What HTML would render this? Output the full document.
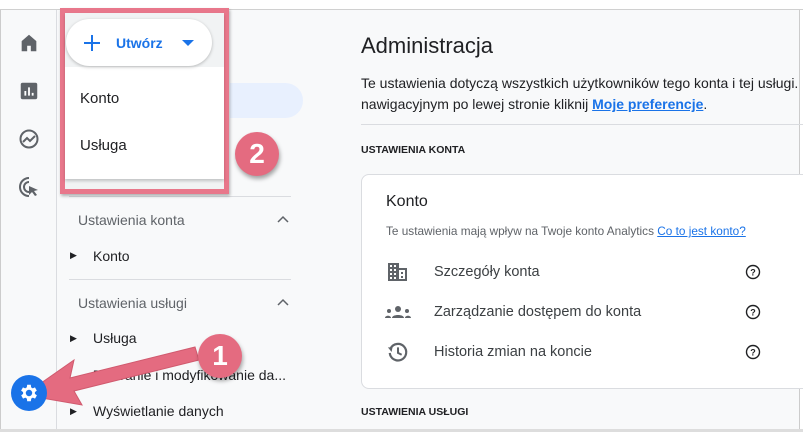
<!DOCTYPE html>
<html><head><meta charset="utf-8"><style>
*{margin:0;padding:0;box-sizing:border-box}
body{width:803px;height:432px;overflow:hidden;background:#f8f9fa;font-family:"Liberation Sans",Arial,sans-serif;position:relative;color:#202124}
.abs{position:absolute}
</style></head><body>
<div class="abs" style="left:0;top:0;width:803px;height:10px;background:#fff;border-bottom:1px solid #d0d0d0"></div>
<div class="abs" style="left:0;top:10px;width:57px;height:422px;background:#f8f9fa;border-right:1px solid #dadce0;border-left:1px solid #ccc"></div>
<div class="abs" style="left:799px;top:10px;width:4px;height:422px;background:#fff;border-left:1px solid #ccc"></div>
<div class="abs" style="left:0;top:429px;width:803px;height:3px;background:#ddd"></div>
<svg class="abs" style="left:18px;top:32px" width="22" height="22" viewBox="0 0 24 24"><path d="M4 21V10l8-7 8 7v11h-6v-6h-4v6z" fill="#5f6368"/></svg>
<svg class="abs" style="left:18px;top:80px" width="22" height="22" viewBox="0 0 24 24"><rect x="3" y="3" width="18" height="18" rx="2" fill="#5f6368"/><path d="M8 17v-5M12 17V8M16 17v-3" stroke="#fff" stroke-width="2"/></svg>
<svg class="abs" style="left:17px;top:127px" width="24" height="24" viewBox="0 0 24 24"><circle cx="12" cy="12" r="8.5" fill="none" stroke="#5f6368" stroke-width="2"/><path d="M6 15l4-4 3 3 5-5" fill="none" stroke="#5f6368" stroke-width="2"/></svg>
<svg class="abs" style="left:17px;top:175px" width="24" height="24" viewBox="0 0 24 24"><path d="M12 3a9 9 0 1 0 0 18M12 7a5 5 0 1 0 0 10" fill="none" stroke="#5f6368" stroke-width="2"/><path d="M12 11l9 4-4 1 3 4-2 1-3-4-3 3z" fill="#5f6368"/></svg>
<div class="abs" style="left:230px;top:83px;width:73px;height:35px;background:#e8f0fe;border-radius:0 18px 18px 0"></div>
<div class="abs" style="left:69px;top:196px;width:222px;height:1px;background:#dadce0"></div>
<div class="abs" style="left:78px;top:212px;font-size:14px;color:#5f6368">Ustawienia konta</div>
<svg class="abs" style="left:277px;top:215px" width="12" height="8"><path d="M1 7l5-5 5 5" fill="none" stroke="#5f6368" stroke-width="1.5"/></svg>
<div class="abs" style="left:70px;top:250px;font-size:9px;color:#202124">▶</div>
<div class="abs" style="left:93px;top:248px;font-size:14px;color:#202124">Konto</div>
<div class="abs" style="left:69px;top:279px;width:222px;height:1px;background:#dadce0"></div>
<div class="abs" style="left:78px;top:295px;font-size:14px;color:#5f6368">Ustawienia usługi</div>
<svg class="abs" style="left:277px;top:298px" width="12" height="8"><path d="M1 7l5-5 5 5" fill="none" stroke="#5f6368" stroke-width="1.5"/></svg>
<div class="abs" style="left:70px;top:333px;font-size:9px">▶</div>
<div class="abs" style="left:93px;top:330px;font-size:14px">Usługa</div>
<div class="abs" style="left:93px;top:367px;font-size:14px">Zbieranie i modyfikowanie da...</div>
<div class="abs" style="left:70px;top:406px;font-size:9px">▶</div>
<div class="abs" style="left:93px;top:403px;font-size:14px">Wyświetlanie danych</div>
<div class="abs" style="left:361px;top:33px;font-size:22px;color:#202124">Administracja</div>
<div class="abs" style="left:361px;top:73px;font-size:14px;line-height:21px;white-space:nowrap">Te ustawienia dotyczą wszystkich użytkowników tego konta i tej usługi.<br>nawigacyjnym po lewej stronie kliknij <b style="color:#1a73e8;text-decoration:underline">Moje preferencje</b>.</div>
<div class="abs" style="left:361px;top:124px;width:442px;height:1px;background:#dadce0"></div>
<div class="abs" style="left:361px;top:144px;font-size:10.5px;font-weight:bold;color:#202124">USTAWIENIA KONTA</div>
<div class="abs" style="left:361px;top:174px;width:450px;height:215px;background:#fff;border:1px solid #dadce0;border-radius:8px"></div>
<div class="abs" style="left:386px;top:193px;font-size:16px">Konto</div>
<div class="abs" style="left:386px;top:224px;font-size:11.8px;color:#5f6368;white-space:nowrap">Te ustawienia mają wpływ na Twoje konto Analytics <span style="color:#1a73e8;text-decoration:underline">Co to jest konto?</span></div>
<svg class="abs" style="left:387px;top:262px" width="22" height="20" viewBox="0 0 22 20"><path d="M1 1h11v5h8v13H1z" fill="#5f6368"/><g fill="#fff"><rect x="3" y="3" width="2" height="2"/><rect x="7" y="3" width="2" height="2"/><rect x="3" y="7" width="2" height="2"/><rect x="7" y="7" width="2" height="2"/><rect x="3" y="11" width="2" height="2"/><rect x="7" y="11" width="2" height="2"/><rect x="3" y="15" width="2" height="2"/><rect x="7" y="15" width="2" height="2"/><rect x="12" y="8" width="6" height="9"/></g><rect x="14" y="10" width="2" height="2" fill="#5f6368"/><rect x="14" y="14" width="2" height="2" fill="#5f6368"/></svg>
<div class="abs" style="left:434px;top:264px;font-size:14.5px;color:#3c4043">Szczegóły konta</div>
<svg class="abs" style="left:385px;top:304px" width="26" height="16" viewBox="0 0 26 16"><circle cx="13" cy="5" r="3" fill="#5f6368"/><path d="M7 14c0-4 12-4 12 0z" fill="#5f6368"/><circle cx="4" cy="7" r="2" fill="#5f6368"/><circle cx="22" cy="7" r="2" fill="#5f6368"/><path d="M0 14c0-3 6-3 6 0zM20 14c0-3 6-3 6 0z" fill="#5f6368"/></svg>
<div class="abs" style="left:434px;top:304px;font-size:14.5px;color:#3c4043">Zarządzanie dostępem do konta</div>
<svg class="abs" style="left:387px;top:341px" width="22" height="22" viewBox="0 0 24 24"><path d="M4 8a9 9 0 1 1-1 5" fill="none" stroke="#5f6368" stroke-width="2.4"/><path d="M1 7l5 0-1 5z" fill="#5f6368"/><path d="M12 7v6l4 2" fill="none" stroke="#5f6368" stroke-width="2.2"/></svg>
<div class="abs" style="left:434px;top:344px;font-size:14.5px;color:#3c4043">Historia zmian na koncie</div>
<svg class="abs" style="left:745px;top:264px" width="16" height="16" viewBox="0 0 16 16"><circle cx="8" cy="8" r="6.5" fill="none" stroke="#202124" stroke-width="1.4"/><text x="8" y="11.5" font-size="9" text-anchor="middle" font-family="Liberation Sans" font-weight="bold" fill="#202124">?</text></svg>
<svg class="abs" style="left:745px;top:304px" width="16" height="16" viewBox="0 0 16 16"><circle cx="8" cy="8" r="6.5" fill="none" stroke="#202124" stroke-width="1.4"/><text x="8" y="11.5" font-size="9" text-anchor="middle" font-family="Liberation Sans" font-weight="bold" fill="#202124">?</text></svg>
<svg class="abs" style="left:745px;top:344px" width="16" height="16" viewBox="0 0 16 16"><circle cx="8" cy="8" r="6.5" fill="none" stroke="#202124" stroke-width="1.4"/><text x="8" y="11.5" font-size="9" text-anchor="middle" font-family="Liberation Sans" font-weight="bold" fill="#202124">?</text></svg>
<div class="abs" style="left:361px;top:406px;font-size:10.5px;font-weight:bold">USTAWIENIA USŁUGI</div>
<div class="abs" style="left:60px;top:8px;width:169px;height:186px;border:5px solid #e8778b;background:#f1f3f4;box-shadow:1px 2px 3px rgba(0,0,0,.3)"></div>
<div class="abs" style="left:65px;top:13px;width:159px;height:166px;background:#fff;box-shadow:0 2px 3px rgba(0,0,0,.2)"></div>
<div class="abs" style="left:65px;top:13px;width:159px;height:54px;background:#f1f3f4"></div>
<div class="abs" style="left:66px;top:19px;width:146px;height:47px;background:#fff;border-radius:24px;box-shadow:0 1px 3px rgba(0,0,0,.25)"></div>
<svg class="abs" style="left:83px;top:34px" width="18" height="18" viewBox="0 0 18 18"><path d="M9 1v16M1 9h16" stroke="#1a73e8" stroke-width="2"/></svg>
<div class="abs" style="left:116px;top:35px;font-size:14px;color:#1a73e8;font-weight:bold">Utwórz</div>
<svg class="abs" style="left:182px;top:40px" width="12" height="6"><path d="M0 0h12L6 6z" fill="#1a73e8"/></svg>
<div class="abs" style="left:80px;top:90px;font-size:15px">Konto</div>
<div class="abs" style="left:80px;top:137px;font-size:15px">Usługa</div>
<div class="abs" style="left:235px;top:132px;width:44px;height:44px;border-radius:50%;background:#e46b80;box-shadow:1px 3px 4px rgba(0,0,0,.35);color:#fff;font-size:28px;font-weight:bold;text-align:center;line-height:44px">2</div>
<svg class="abs" style="left:0;top:330px" width="240" height="80"><path d="M195 17L70 48l4-18-50 35 58 10-8-14 125-31z" fill="#e46b80" stroke="#d05a6e" stroke-width="1"/></svg>
<div class="abs" style="left:198px;top:334px;width:44px;height:44px;border-radius:50%;background:#e46b80;box-shadow:1px 3px 4px rgba(0,0,0,.35);color:#fff;font-size:28px;font-weight:bold;text-align:center;line-height:44px">1</div>
<div class="abs" style="left:11px;top:375px;width:36px;height:36px;border-radius:50%;background:#1a73e8"></div>
<svg class="abs" style="left:18px;top:382px" width="22" height="22" viewBox="0 0 24 24"><path fill="#fff" d="M19.4 13a7.5 7.5 0 0 0 0-2l2.1-1.6-2-3.5-2.5 1a7 7 0 0 0-1.7-1L15 3h-4l-.4 2.9a7 7 0 0 0-1.7 1l-2.5-1-2 3.5L6.6 11a7.5 7.5 0 0 0 0 2l-2.1 1.6 2 3.5 2.5-1a7 7 0 0 0 1.7 1L11 21h4l.4-2.9a7 7 0 0 0 1.7-1l2.5 1 2-3.5zM13 15.5a3.5 3.5 0 1 1 0-7 3.5 3.5 0 0 1 0 7z" transform="translate(-1 0)"/></svg>
</body></html>
